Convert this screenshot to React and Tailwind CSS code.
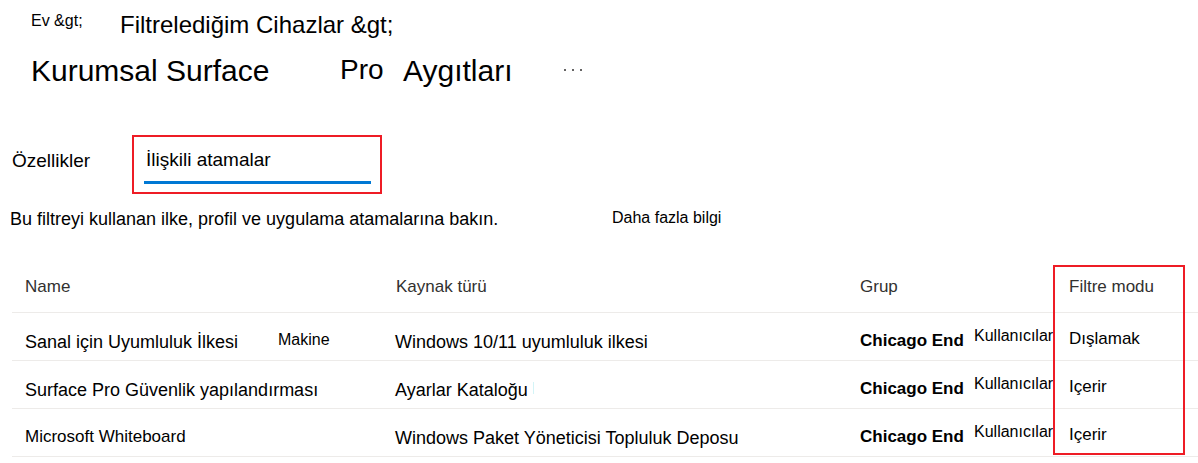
export default function App() {
  const rows = [
    {
      name: "Sanal için Uyumluluk İlkesi",
      nameSize: "text-[18px]",
      extra: "Makine",
      type: "Windows 10/11 uyumluluk ilkesi",
      mark: false,
      mode: "Dışlamak",
    },
    {
      name: "Surface Pro Güvenlik yapılandırması",
      nameSize: "text-[18px]",
      extra: null,
      type: "Ayarlar Kataloğu",
      mark: true,
      mode: "Içerir",
    },
    {
      name: "Microsoft Whiteboard",
      nameSize: "text-[17px]",
      extra: null,
      type: "Windows Paket Yöneticisi Topluluk Deposu",
      mark: false,
      mode: "Içerir",
    },
  ];

  return (
    <div className="w-[1198px] h-[463px] overflow-hidden bg-white font-['Liberation_Sans',Arial,sans-serif] text-black">
      {/* Breadcrumb */}
      <div className="flex items-start pt-[13px] pl-[31px]">
        <span className="w-[89px] text-[16px] leading-none">Ev &amp;gt;</span>
        <span className="text-[24px] leading-none">Filtrelediğim Cihazlar &amp;gt;</span>
      </div>

      {/* Title */}
      <div className="flex items-start mt-[19px] pl-[31px]">
        <h1 className="w-[309px] text-[30px] leading-none font-normal">Kurumsal Surface</h1>
        <span className="w-[63px] text-[28px] leading-none">Pro</span>
        <span className="w-[161px] text-[30px] leading-none">Aygıtları</span>
        <div className="mt-[13px] flex gap-[6px]">
          <span className="w-[2px] h-[2px] rounded-full bg-[#323130]" />
          <span className="w-[2px] h-[2px] rounded-full bg-[#323130]" />
          <span className="w-[2px] h-[2px] rounded-full bg-[#323130]" />
        </div>
      </div>

      {/* Tabs */}
      <div className="flex items-start mt-[49px]">
        <div className="w-[132px] pl-[12px] pt-[15px]">
          <span className="text-[19px] leading-none">Özellikler</span>
        </div>
        <div className="w-[250px] h-[59px] border-2 border-[#ee1c25] pt-[13px] pl-[10px]">
          <div className="w-[227px]">
            <div className="pl-[2px] text-[19px] leading-none">İlişkili atamalar</div>
            <div className="mt-[12px] h-[3px] bg-[#0078d4]" />
          </div>
        </div>
      </div>

      {/* Description */}
      <div className="flex items-start mt-[16px]">
        <p className="ml-[10px] w-[602px] text-[18px] leading-none">
          Bu filtreyi kullanan ilke, profil ve uygulama atamalarına bakın.
        </p>
        <span className="text-[16px] leading-none">Daha fazla bilgi</span>
      </div>

      {/* Table */}
      <div className="relative mt-[37px] ml-[12px]">
        <div className="grid grid-cols-[370px_465px_209px_142px] h-[48px] border-b border-[#edebe9] text-[17px] leading-none text-[#323130]">
          <div className="pl-[13px] pt-[13px]">Name</div>
          <div className="pl-[14px] pt-[13px]">Kaynak türü</div>
          <div className="pl-[13px] pt-[13px]">Grup</div>
          <div className="pl-[13px] pt-[13px]">Filtre modu</div>
        </div>

        {rows.map((r, i) => (
          <div
            key={i}
            className="grid grid-cols-[370px_465px_209px_142px] h-[48px] border-b border-[#edebe9] leading-none"
          >
            <div className="flex items-start pl-[13px]">
              <span
                className={`min-w-[253px] shrink-0 whitespace-nowrap ${r.nameSize} leading-none ${
                  i === 2 ? "pt-[19px]" : "pt-[20px]"
                }`}
              >
                {r.name}
              </span>
              {r.extra && (
                <span className="pt-[19px] text-[16px] leading-none whitespace-nowrap">{r.extra}</span>
              )}
            </div>
            <div className="flex items-start pl-[13px] pt-[20px]">
              <span className="text-[18px] leading-none whitespace-nowrap">{r.type}</span>
              {r.mark && <span className="ml-[5px] mt-[1px] w-[1px] h-[12px] bg-[#d3f4f7]" />}
            </div>
            <div className="flex items-start pl-[13px] overflow-hidden">
              <span className="w-[114px] shrink-0 pt-[19px] text-[17px] font-bold leading-none whitespace-nowrap">
                Chicago End
              </span>
              <span className="pt-[15px] text-[16px] leading-none whitespace-nowrap">Kullanıcılar</span>
            </div>
            <div className="pl-[13px] pt-[17px] text-[17px] leading-none">{r.mode}</div>
          </div>
        ))}

        <div className="absolute left-[1041px] top-0 w-[132px] h-[190px] border-2 border-[#ee1c25] pointer-events-none" />
      </div>
    </div>
  );
}
